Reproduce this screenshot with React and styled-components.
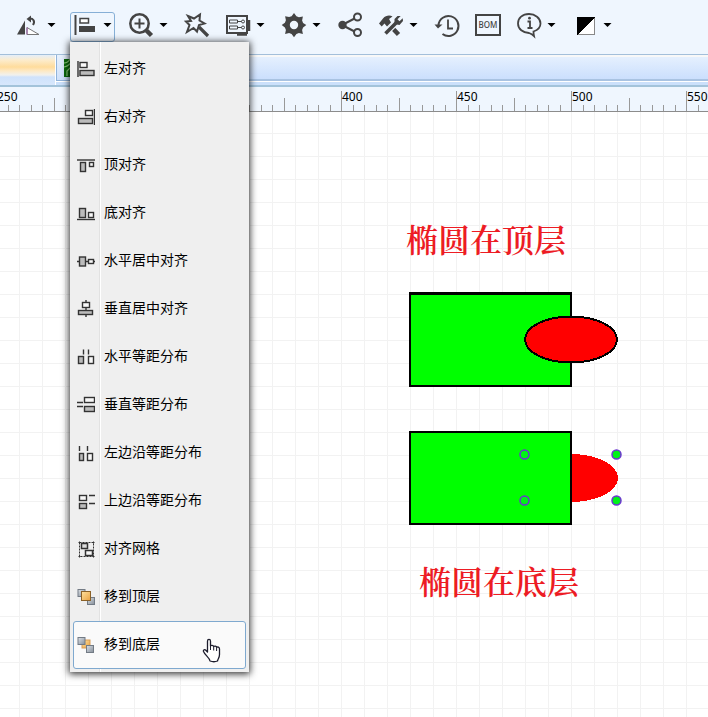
import React from "react";
import styled, { createGlobalStyle } from "styled-components";

const GlobalStyle = createGlobalStyle`
  * { box-sizing: border-box; }
  body {
    margin: 0;
    background: #fff;
    color: #000;
    font-family: "Noto Sans", "Noto Sans CJK SC", sans-serif;
  }
`;

const Page = styled.div`
  display: flex;
  flex-direction: column;
  min-height: 100vh;
  overflow: hidden;
`;

const Toolbar = styled.header`
  display: flex;
  align-items: flex-start;
  gap: 11px;
  height: 54px;
  padding: 12px 14px 0;
  background: #eff6fe;
`;

const ToolSlot = styled.div`
  position: relative;
  flex: none;
`;

const ToolButton = styled.button`
  display: flex;
  align-items: center;
  gap: 6px;
  height: 30px;
  padding: 0 2px 4px;
  border: 1px solid ${(p) => (p.$open ? "#86afd6" : "transparent")};
  border-radius: 3px;
  background: transparent;
  color: #444;
  cursor: pointer;
`;

const ToolIcon = styled.svg`
  display: block;
  width: 24px;
  height: 24px;
  overflow: visible;
`;

const Caret = styled.svg`
  display: block;
  width: 9px;
  height: 4px;
`;

const Menu = styled.div`
  position: absolute;
  z-index: 2;
  top: 30px;
  left: 0;
  width: 179px;
  padding: 3px;
  background: linear-gradient(90deg, #efefef 29px, #e2e2e2 29px 30px, #fff 30px 31px, #efefef 31px);
  box-shadow: 0 1px 7px 1px rgba(0, 0, 0, 0.8);
`;

const MenuItem = styled.button`
  display: flex;
  align-items: center;
  gap: 9px;
  width: 100%;
  height: 48px;
  padding: 0 3px;
  border: 1px solid ${(p) => (p.$active ? "#7fa9cf" : "transparent")};
  border-radius: 3px;
  background: ${(p) => (p.$active ? "#fafafa" : "transparent")};
  color: #000;
  font: 400 14px/20px "Noto Sans CJK SC", sans-serif;
  text-align: left;
  white-space: nowrap;
  cursor: pointer;
`;

const MenuLabel = styled.span`
  padding-bottom: 4px;
`;

const MenuIcon = styled.svg`
  flex: none;
  width: 18px;
  height: 18px;
  color: #333;
`;

const Pointer = styled.svg`
  position: absolute;
  right: 28px;
  bottom: 9px;
  width: 19px;
  height: 25px;
`;

const TabStrip = styled.nav`
  display: flex;
  height: 33px;
  border-top: 1px solid #a3bfda;
  border-bottom: 2px solid #a3c3da;
  background: linear-gradient(#f8f8f8 0 2px, #e5f0fe 2px, #cbdffd 24px, #a9c3e2 24px 26px, #fff 26px 27px, #cbe0fb 27px);
`;

const Tab = styled.button`
  display: flex;
  align-items: center;
  flex: none;
  width: ${(p) => (p.$current ? "56px" : "130px")};
  height: ${(p) => (p.$current ? "30px" : "26px")};
  padding: 0 0 0 7px;
  border: 0;
  border-right: 1px solid #fff;
  border-left: ${(p) => (p.$current ? "0" : "1px solid #91b3d9")};
  border-bottom: ${(p) => (p.$current ? "0" : "1px solid #91b3d9")};
  background: ${(p) =>
    p.$current
      ? "linear-gradient(#e4eefa, #fceccd 5px, #ffdc9c 12px, #fde9c5 16px, #f1f1ee 20px, #cfe2fb 22px, #d7e7fc)"
      : "linear-gradient(#e8f1fd, #cfe1fb)"};
`;

const TabIcon = styled.svg`
  width: 18px;
  height: 18px;
`;

const Ruler = styled.div`
  display: flex;
  height: 25px;
  border-bottom: 1px solid #8c8c8c;
  background: #eff6fe;
  overflow: hidden;
`;

const RulerTrack = styled.div`
  display: flex;
  margin-left: -4px;
`;

const RulerCell = styled.div`
  display: flex;
  flex-direction: column;
  justify-content: space-between;
  flex: none;
  width: 115px;
  height: 20px;
  margin-top: 4px;
  border-left: 1px solid #999;
  font: 12px/12px "Noto Sans", sans-serif;
`;

const RulerLabel = styled.span`
  height: 6px;
`;

const Ticks = styled.svg`
  display: block;
  width: 114px;
  height: 13px;
`;

const Canvas = styled.main`
  position: relative;
  flex: 1;
  min-height: 560px;
  overflow: hidden;
`;

const Drawing = styled.svg`
  position: absolute;
  inset: 0;
  width: 100%;
  height: 100%;
`;

const CanvasText = styled.p`
  position: absolute;
  left: ${(p) => p.$x}px;
  top: ${(p) => p.$y}px;
  margin: 0;
  color: #ed1c24;
  font: 600 32px/40px "Noto Serif CJK SC", "Noto Sans CJK SC", serif;
  white-space: nowrap;
`;

const S = { fill: "none", stroke: "currentColor" };

const toolIcons = {
  flip: (
    <g>
      <path d="M8 7.500V21.500H0z" fill="currentColor" />
      <path d="M10 14.500v7h12z" fill="#fff" stroke="#777" />
      <path d="M10 14.500v7" stroke="#9b5ca8" />
      <path d="M16 12c2.500-4 0-6.500-3-6.500" {...S} strokeWidth="2" />
      <path d="M9.500 6l4.500-3.500v7z" fill="currentColor" />
    </g>
  ),
  align: (
    <g>
      <path d="M2.500 2v20" {...S} strokeWidth="2" />
      <rect x="7" y="5.500" width="8.500" height="4.500" fill="#fff" stroke="currentColor" strokeWidth="1.500" />
      <rect x="6" y="13" width="16" height="6" fill="currentColor" />
    </g>
  ),
  zoom: (
    <g {...S}>
      <circle cx="10.500" cy="10.500" r="9.200" strokeWidth="2.500" />
      <path d="M10.500 5.500v10M5.500 10.500h10" strokeWidth="2" />
      <path d="M17.500 17.500l5 5" strokeWidth="4.500" />
    </g>
  ),
  wand: (
    <g {...S}>
      <path d="M3 3l6 2.500L15 1.500l-.5 6 5 3-5.500 1.500-2 6.500-3.500-3.500-6.500 4 2.500-7-3.500-3.500 5-.5z" strokeWidth="2" />
      <path d="M14 14l9 9" strokeWidth="3.200" />
    </g>
  ),
  panel: (
    <g {...S}>
      <rect x="1" y="3" width="20" height="17" strokeWidth="2" />
      <path d="M23 7v11" strokeWidth="2.500" />
      <path d="M11 21.500h10" strokeWidth="2.500" />
      <path d="M3.500 7h8v3h-8zM3.500 13h8v3h-8zM11.500 8.500h4M11.500 14.500h4" />
      <circle cx="17" cy="8.500" r="1.500" />
      <circle cx="17" cy="14.500" r="1.500" />
    </g>
  ),
  gear: (
    <path
      fill="currentColor"
      fillRule="evenodd"
      d="M9.600 3.200 12 0l2.400 3.200 2.500 1 4-.8-.8 4 1 2.500L24.300 12l-3.200 2.400-1 2.500.8 4-4-.8-2.500 1L12 24.300l-2.400-3.200-2.500-1-4 .8.800-4-1-2.500L-.3 12l3.200-2.300 1-2.400-.8-4 4 .8zM12 7.800a4.200 4.200 0 1 0 0 8.400 4.200 4.200 0 0 0 0-8.400z"
    />
  ),
  share: (
    <g {...S} strokeWidth="2">
      <path d="M4 12l14.500-7.500M4 12l14.500 7.500" />
      <circle cx="4.500" cy="12" r="4.200" fill="currentColor" stroke="none" />
      <circle cx="19.500" cy="4" r="3.500" fill="#eff6fe" />
      <circle cx="19.500" cy="19.500" r="3.500" fill="#eff6fe" />
    </g>
  ),
  tools: (
    <g>
      <path d="M11 12.500l8.500 9" {...S} strokeWidth="4.500" />
      <path d="M0 10.500l4-5C7 2 11 2 13.500 3.500L10 6l2 3.500-4 4-2.500-3-2.800 3z" fill="currentColor" />
      <path d="M6.500 20.500L18 9" stroke="#eff6fe" strokeWidth="6" />
      <path d="M6.500 20.500L18 9" {...S} strokeWidth="3.500" />
      <path d="M18.500 3l-3 3v5l5 1 3.500-4-.3-2.800-3.200 3-2-2 3.200-3.200z" fill="currentColor" />
    </g>
  ),
  history: (
    <g {...S}>
      <path d="M3.500 12A10 10 0 1 1 7.500 21" strokeWidth="2" />
      <path d="M-.5 11.500h8L3 15.500z" fill="currentColor" stroke="none" />
      <path d="M13 6.500v9h5" strokeWidth="1.800" />
    </g>
  ),
  bom: (
    <g>
      <rect x="0" y="2" width="24" height="20" {...S} strokeWidth="2" />
      <text x="12" y="15" textAnchor="middle" fill="currentColor" fontFamily="Noto Sans, sans-serif" fontWeight="500" fontSize="8">
        BOM
      </text>
    </g>
  ),
  info: (
    <g>
      <path d="M12 1C5.500 1 1 5 1 10.500S6 20 12 20q3 1 5 3-.5-2.500-.5-4.500C21 17 23.500 14 23.500 10.500 23.500 5 18 1 12 1z" {...S} strokeWidth="1.800" />
      <path d="M10.500 8.500H13V15M10.500 15h5" {...S} strokeWidth="1.800" />
      <circle cx="12.500" cy="5.200" r="1.400" fill="currentColor" />
    </g>
  ),
  contrast: (
    <g shapeRendering="crispEdges">
      <rect x="4.500" y="4.500" width="17" height="17" fill="#fff" stroke="#888" />
      <path d="M4 4h18L4 22z" fill="#000" />
    </g>
  ),
};

const tools = [
  { id: "flip", label: "翻转", caret: true },
  { id: "align", label: "对齐", caret: true, open: true },
  { id: "zoom", label: "缩放", caret: true },
  { id: "wand", label: "魔棒" },
  { id: "panel", label: "面板", caret: true },
  { id: "gear", label: "设置", caret: true },
  { id: "share", label: "分享" },
  { id: "tools", label: "工具", caret: true },
  { id: "history", label: "历史" },
  { id: "bom", label: "BOM" },
  { id: "info", label: "信息", caret: true },
  { id: "contrast", label: "主题", caret: true },
];

/* Each entry: filled boxes, hollow boxes [x, y, w, h] and guide lines. */
const alignIcons = {
  left: { solid: [[3, 10.5, 14, 5]], open: [[3, 2.5, 7, 5]], lines: "M1 1v16" },
  right: { solid: [[1.5, 10.5, 14, 5]], open: [[8.5, 2.5, 7, 5]], lines: "M17.500 1v16" },
  top: { solid: [[3.5, 6.5, 5, 9]], open: [[12.5, 6.5, 4, 4]], lines: "M0 4h18" },
  bottom: { solid: [[2.5, 4.5, 6, 9]], open: [[11.5, 8.5, 5, 5]], lines: "M0 15.500h18" },
  hcenter: { solid: [[2.5, 5, 6, 9]], open: [[11.5, 7.5, 5, 4]], lines: "M0 9.500h2M9 9.500h2M17 9.500h1" },
  vcenter: { solid: [[1.5, 10.5, 14, 4]], open: [[5.5, 2.5, 7, 5]], lines: "M9 0v2M9 8v2M9 15v2" },
  hdist: { solid: [[1.5, 8.5, 5, 7]], open: [[11.5, 8.5, 5, 7]], lines: "M6.500 1.500v5M11.500 1.500v5" },
  vdist: { solid: [[7.5, 10.5, 10, 5]], open: [[7.5, 1.5, 10, 5]], lines: "M0 6.500h6M0 10.500h6" },
  ldist: { solid: [[2.5, 9.5, 4, 7]], open: [[10.5, 9.5, 5, 7]], lines: "M2.500 2v5M10.500 2v5" },
  tdist: { solid: [[2.5, 11.5, 7, 5]], open: [[2.5, 3.5, 7, 5]], lines: "M12 3.500h6M12 11.500h6" },
};

const AlignGlyph = ({ solid, open, lines }) => (
  <g stroke="currentColor" strokeWidth="1.400">
    {solid.map(([x, y, w, h]) => (
      <rect key={x} x={x} y={y} width={w} height={h} fill="#bbb" />
    ))}
    {open.map(([x, y, w, h]) => (
      <rect key={x} x={x} y={y} width={w} height={h} fill="#f8f8f8" />
    ))}
    <path d={lines} />
  </g>
);

const GridGlyph = () => (
  <g fill="none" stroke="currentColor">
    <path d="M2.500 2.500h14v14h-14z" strokeDasharray="2 1" />
    <path d="M1.500 2.500h2M15.500 2.500h2M1.500 16.500h2M15.500 16.500h2M2.500 1.500v2M16.500 1.500v2M2.500 15.500v2M16.500 15.500v2" />
    <rect x="4.500" y="3.500" width="6" height="5" fill="#ddd" strokeWidth="1.500" />
    <rect x="8.500" y="10.500" width="7" height="5" fill="#f8f8f8" strokeWidth="1.500" />
  </g>
);

const grey = { fill: "url(#greyBox)", stroke: "#737b85" };
const gold = { fill: "url(#goldBox)", stroke: "#8a6128" };

const FrontGlyph = () => (
  <g>
    <rect x="1" y="1.500" width="7" height="7" {...grey} />
    <rect x="10.500" y="9.500" width="7" height="7" {...grey} />
    <rect x="4.500" y="3.500" width="9" height="9" {...gold} />
  </g>
);

const BackGlyph = () => (
  <g>
    <rect x="5" y="4" width="8" height="8" fill="url(#goldBox)" stroke="#d79b57" />
    <rect x="1" y="1.500" width="7" height="7" {...grey} />
    <rect x="9.500" y="9.500" width="7" height="7" {...grey} />
  </g>
);

const menuItems = [
  ["左对齐", <AlignGlyph {...alignIcons.left} />],
  ["右对齐", <AlignGlyph {...alignIcons.right} />],
  ["顶对齐", <AlignGlyph {...alignIcons.top} />],
  ["底对齐", <AlignGlyph {...alignIcons.bottom} />],
  ["水平居中对齐", <AlignGlyph {...alignIcons.hcenter} />],
  ["垂直居中对齐", <AlignGlyph {...alignIcons.vcenter} />],
  ["水平等距分布", <AlignGlyph {...alignIcons.hdist} />],
  ["垂直等距分布", <AlignGlyph {...alignIcons.vdist} />],
  ["左边沿等距分布", <AlignGlyph {...alignIcons.ldist} />],
  ["上边沿等距分布", <AlignGlyph {...alignIcons.tdist} />],
  ["对齐网格", <GridGlyph />],
  ["移到顶层", <FrontGlyph />],
  ["移到底层", <BackGlyph />],
];

const AlignMenu = () => (
  <Menu role="menu" aria-label="对齐">
    {menuItems.map(([label, glyph]) => (
      <MenuItem key={label} type="button" role="menuitem" $active={label === "移到底层"}>
        <MenuIcon viewBox="0 0 18 18" aria-hidden="true">
          <defs>
            <linearGradient id="greyBox" x2="1" y2="1">
              <stop stopColor="#dde2e7" />
              <stop offset="1" stopColor="#858e99" />
            </linearGradient>
            <linearGradient id="goldBox" x2="1" y2="1">
              <stop stopColor="#ffe2a0" />
              <stop offset="1" stopColor="#e9a140" />
            </linearGradient>
          </defs>
          {glyph}
        </MenuIcon>
        <MenuLabel>{label}</MenuLabel>
      </MenuItem>
    ))}
    <Pointer viewBox="0 0 19 25" aria-hidden="true">
      <path
        d="M5.500 14V3.200C5.500.8 8.500.8 8.500 3.200V8c.5-1 2.800-1 3.200.5.800-.8 2.500-.5 2.900.8 1-.7 2.900-.2 2.900 1.700v5.500c0 3-1.500 4-2 6.500q-3.500 1.500-7.500 0C7.500 19.500 3.500 18 1.500 13.500c-.5-1.700 1.300-2.300 2.300-1.300z"
        fill="#fff"
        stroke="#1c1c2c"
        strokeWidth="1.300"
        strokeLinejoin="round"
      />
      <path d="M8.500 7.500V12M11.700 8.500v4M14.600 9.500v3.500" stroke="#1c1c2c" />
    </Pointer>
  </Menu>
);

const handles = [
  [524.5, 342.5],
  [616.5, 342.5],
  [524.5, 388.5],
  [616.5, 388.5],
];

const rulerCells = [250, 300, 350, 400, 450, 500, 550, ...Array(10).fill(null)];

export default function App() {
  return (
    <Page>
      <GlobalStyle />
      <Toolbar>
        {tools.map((t) => (
          <ToolSlot key={t.id}>
            <ToolButton type="button" aria-label={t.label} $open={t.open}>
              <ToolIcon viewBox="0 0 24 24" aria-hidden="true">
                {toolIcons[t.id]}
              </ToolIcon>
              {t.caret && (
                <Caret viewBox="0 0 9 4" aria-hidden="true">
                  <path d="M.5 0h8l-4 4z" fill="#000" />
                </Caret>
              )}
            </ToolButton>
            {t.open && <AlignMenu />}
          </ToolSlot>
        ))}
      </Toolbar>
      <TabStrip>
        <Tab type="button" $current aria-label="当前文档" />
        <Tab type="button" aria-label="原理图">
          <TabIcon viewBox="0 0 18 18" aria-hidden="true">
            <rect width="18" height="18" fill="#0b6b0b" />
            <path d="M0 4q4 0 6-4M0 8q6-1 9-8M3 17v-5l9-9" fill="none" stroke="#8ed07c" strokeWidth="1.200" />
          </TabIcon>
        </Tab>
      </TabStrip>
      <Ruler>
        <RulerTrack>
          {rulerCells.map((n, i) => (
            <RulerCell key={i}>
              <RulerLabel>{n}</RulerLabel>
              <Ticks viewBox="0 0 114 13" aria-hidden="true" shapeRendering="crispEdges">
                {[11, 22, 34, 45, 57, 68, 80, 91, 103].map((x) => (
                  <rect key={x} x={x} y={x === 57 ? 0 : 7} width="1" height="13" fill="#999" />
                ))}
              </Ticks>
            </RulerCell>
          ))}
        </RulerTrack>
      </Ruler>
      <Canvas>
        <Drawing shapeRendering="crispEdges" aria-hidden="true">
          <defs>
            <pattern id="grid" x="19" y="21" width="23" height="23" patternUnits="userSpaceOnUse">
              <path d="M0 .5h23M.5 0v23" stroke="#f2f2f2" />
            </pattern>
          </defs>
          <rect width="100%" height="100%" fill="url(#grid)" />
          <rect x="410" y="182" width="161" height="92" fill="#0f0" stroke="#000" strokeWidth="2" />
          <path d="M409 181.500h163" stroke="#000" strokeWidth="3" />
          <ellipse cx="571" cy="227.500" rx="46" ry="23" fill="#f00" stroke="#000" strokeWidth="2" />
          <ellipse cx="571" cy="366" rx="47" ry="24" fill="#f00" />
          <rect x="410" y="320" width="161" height="92" fill="#0f0" stroke="#000" strokeWidth="2" />
          <g shapeRendering="geometricPrecision">
            {handles.map(([x, y]) => (
              <circle key={`${x}-${y}`} cx={x} cy={y} r="4.500" fill="#00f218" stroke="#6a35d0" strokeWidth="1.500" />
            ))}
          </g>
        </Drawing>
        <CanvasText $x={406} $y={106}>椭圆在顶层</CanvasText>
        <CanvasText $x={419} $y={448}>椭圆在底层</CanvasText>
      </Canvas>
    </Page>
  );
}
